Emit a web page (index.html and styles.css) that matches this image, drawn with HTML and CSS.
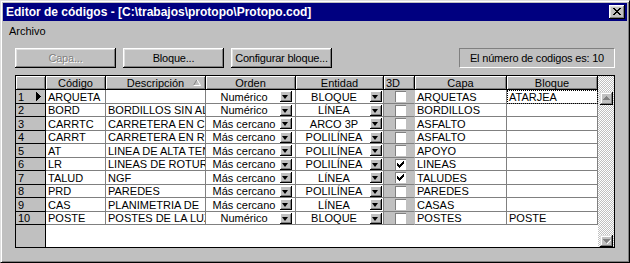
FILE: index.html
```html
<!DOCTYPE html>
<html lang="es">
<head>
<meta charset="utf-8">
<title>Editor de códigos</title>
<link rel="stylesheet" href="styles.css">
</head>
<body>
<div class="window">
  <div class="titlebar">
    <span class="title">Editor de códigos - [C:\trabajos\protopo\Protopo.cod]</span>
    <span class="close"><svg width="8" height="7" viewBox="0 0 8 7" shape-rendering="crispEdges"><path d="M0 0h2v1H0zM6 0h2v1H6zM1 1h2v1H1zM5 1h2v1H5zM2 2h4v1H2zM3 3h2v1H3zM2 4h4v1H2zM1 5h2v1H1zM5 5h2v1H5zM0 6h2v1H0zM6 6h2v1H6z" fill="#000"/></svg></span>
  </div>
  <div class="menubar"><span class="menu-item">Archivo</span></div>
  <div class="content">
    <div class="toolbar">
      <span class="btn disabled">Capa...</span>
      <span class="btn">Bloque...</span>
      <span class="btn">Configurar bloque...</span>
      <span class="count">El número de codigos es: 10</span>
    </div>
    <div class="grid">
      <div class="table">
        <div class="row head">
          <div class="hcell"></div>
          <div class="hcell">Código</div>
          <div class="hcell sorted">Descripción<svg class="sort" width="8" height="7" viewBox="0 0 8 7"><path d="M0.5 6.5L4 0.5" stroke="#808080" fill="none"/><path d="M4 0.5L7.5 6.5H0.5" stroke="#fff" fill="none"/></svg></div>
          <div class="hcell">Orden</div>
          <div class="hcell">Entidad</div>
          <div class="hcell left">3D</div>
          <div class="hcell">Capa</div>
          <div class="hcell">Bloque</div>
        </div>

        <div class="row">
          <div class="rh">1<svg class="pointer" width="5" height="9" viewBox="0 0 5 9" shape-rendering="crispEdges"><path d="M0 0h1v9H0zM1 1h1v7H1zM2 2h1v5H2zM3 3h1v3H3zM4 4h1v1H4z" fill="#000"/></svg></div>
          <div class="cell">ARQUETA</div>
          <div class="cell"></div>
          <div class="cell combo orden"><span class="val">Numérico</span><span class="drop"></span></div>
          <div class="cell combo ent"><span class="val">BLOQUE</span><span class="drop"></span></div>
          <div class="cell chk"><span class="box"></span></div>
          <div class="cell">ARQUETAS</div>
          <div class="cell focus">ATARJEA</div>
        </div>

        <div class="row">
          <div class="rh">2</div>
          <div class="cell">BORD</div>
          <div class="cell">BORDILLOS SIN AL</div>
          <div class="cell combo orden"><span class="val">Numérico</span><span class="drop"></span></div>
          <div class="cell combo ent"><span class="val">LÍNEA</span><span class="drop"></span></div>
          <div class="cell chk"><span class="box"></span></div>
          <div class="cell">BORDILLOS</div>
          <div class="cell"></div>
        </div>

        <div class="row">
          <div class="rh">3</div>
          <div class="cell">CARRTC</div>
          <div class="cell">CARRETERA EN C</div>
          <div class="cell combo orden"><span class="val">Más cercano</span><span class="drop"></span></div>
          <div class="cell combo ent"><span class="val">ARCO 3P</span><span class="drop"></span></div>
          <div class="cell chk"><span class="box"></span></div>
          <div class="cell">ASFALTO</div>
          <div class="cell"></div>
        </div>

        <div class="row">
          <div class="rh">4</div>
          <div class="cell">CARRT</div>
          <div class="cell">CARRETERA EN R</div>
          <div class="cell combo orden"><span class="val">Más cercano</span><span class="drop"></span></div>
          <div class="cell combo ent"><span class="val">POLILÍNEA</span><span class="drop"></span></div>
          <div class="cell chk"><span class="box"></span></div>
          <div class="cell">ASFALTO</div>
          <div class="cell"></div>
        </div>

        <div class="row">
          <div class="rh">5</div>
          <div class="cell">AT</div>
          <div class="cell">LINEA DE ALTA TENSION</div>
          <div class="cell combo orden"><span class="val">Más cercano</span><span class="drop"></span></div>
          <div class="cell combo ent"><span class="val">POLILÍNEA</span><span class="drop"></span></div>
          <div class="cell chk"><span class="box"></span></div>
          <div class="cell">APOYO</div>
          <div class="cell"></div>
        </div>

        <div class="row">
          <div class="rh">6</div>
          <div class="cell">LR</div>
          <div class="cell">LINEAS DE ROTURA</div>
          <div class="cell combo orden"><span class="val">Más cercano</span><span class="drop"></span></div>
          <div class="cell combo ent"><span class="val">POLILÍNEA</span><span class="drop"></span></div>
          <div class="cell chk"><span class="box checked"></span></div>
          <div class="cell">LINEAS</div>
          <div class="cell"></div>
        </div>

        <div class="row">
          <div class="rh">7</div>
          <div class="cell">TALUD</div>
          <div class="cell">NGF</div>
          <div class="cell combo orden"><span class="val">Más cercano</span><span class="drop"></span></div>
          <div class="cell combo ent"><span class="val">LÍNEA</span><span class="drop"></span></div>
          <div class="cell chk"><span class="box checked"></span></div>
          <div class="cell">TALUDES</div>
          <div class="cell"></div>
        </div>

        <div class="row">
          <div class="rh">8</div>
          <div class="cell">PRD</div>
          <div class="cell">PAREDES</div>
          <div class="cell combo orden"><span class="val">Más cercano</span><span class="drop"></span></div>
          <div class="cell combo ent"><span class="val">POLILÍNEA</span><span class="drop"></span></div>
          <div class="cell chk"><span class="box"></span></div>
          <div class="cell">PAREDES</div>
          <div class="cell"></div>
        </div>

        <div class="row">
          <div class="rh">9</div>
          <div class="cell">CAS</div>
          <div class="cell">PLANIMETRIA DE</div>
          <div class="cell combo orden"><span class="val">Más cercano</span><span class="drop"></span></div>
          <div class="cell combo ent"><span class="val">LÍNEA</span><span class="drop"></span></div>
          <div class="cell chk"><span class="box"></span></div>
          <div class="cell">CASAS</div>
          <div class="cell"></div>
        </div>

        <div class="row">
          <div class="rh">10</div>
          <div class="cell">POSTE</div>
          <div class="cell">POSTES DE LA LUZ</div>
          <div class="cell combo orden"><span class="val">Numérico</span><span class="drop"></span></div>
          <div class="cell combo ent"><span class="val">BLOQUE</span><span class="drop"></span></div>
          <div class="cell chk"><span class="box"></span></div>
          <div class="cell">POSTES</div>
          <div class="cell">POSTE</div>
        </div>

        <div class="filler">
          <div class="rh-fill"></div>
          <div class="blank"></div>
        </div>
      </div>
      <div class="vscroll">
        <span class="sbtn up"><svg width="7" height="5" viewBox="0 0 7 5" shape-rendering="crispEdges"><path d="M4 1h1v1H4zM3 2h3v1H3zM2 3h5v1H2z" fill="#fff"/><path d="M3 0h1v1H3zM2 1h3v1H2zM1 2h5v1H1zM0 3h7v1H0z" fill="#808080"/></svg></span>
        <span class="sbtn down"><svg width="8" height="5" viewBox="0 0 8 5" shape-rendering="crispEdges"><path d="M7 1h1v1H7zM6 2h1v1H6zM5 3h1v1H5zM4 4h1v1H4z" fill="#fff"/><path d="M0 0h7v1H0zM1 1h5v1H1zM2 2h3v1H2zM3 3h1v1H3z" fill="#808080"/></svg></span>
      </div>
    </div>
  </div>
</div>
</body>
</html>
```

FILE: styles.css
```css
* {
  box-sizing: border-box;
}

html,
body {
  margin: 0;
  padding: 0;
}

body {
  font-family: "Liberation Sans", Arial, sans-serif;
  font-size: 11px;
  color: #000;
  background: #c0c0c0;
}

.window {
  width: 630px;
  height: 263px;
  background: #c0c0c0;
  border: 1px solid;
  border-color: #dfdfdf #000 #000 #dfdfdf;
  box-shadow: inset 1px 1px #fff, inset -1px -1px #808080;
  padding: 2px;
  display: flex;
  flex-direction: column;
}

.titlebar {
  flex: none;
  height: 18px;
  background: #000080;
  color: #fff;
  display: flex;
  align-items: center;
  padding: 0 2px 0 3px;
}

.title {
  font-weight: bold;
  font-size: 12px;
  white-space: nowrap;
}

.close {
  margin-left: auto;
  width: 16px;
  height: 14px;
  background: #c0c0c0;
  box-shadow: inset -1px -1px #000, inset 1px 1px #fff, inset -2px -2px #808080, inset 2px 2px #dfdfdf;
  display: flex;
  align-items: center;
  justify-content: center;
  padding-bottom: 1px;
}

.close svg {
  display: block;
}

.menubar {
  flex: none;
  height: 19px;
  display: flex;
  align-items: center;
  padding-left: 6px;
}

.content {
  flex: 1;
  padding: 8px 12px 0;
  display: flex;
  flex-direction: column;
}

.toolbar {
  display: flex;
  height: 20px;
  gap: 7px;
}

.btn {
  width: 101px;
  height: 20px;
  display: flex;
  align-items: center;
  justify-content: center;
  background: #c0c0c0;
  box-shadow: inset -1px -1px #000, inset 1px 1px #fff, inset -2px -2px #808080, inset 2px 2px #dfdfdf;
  white-space: nowrap;
  letter-spacing: -0.2px;
}

.btn.disabled {
  color: #808080;
  text-shadow: 1px 1px 0 #fff;
}

.count {
  margin-left: auto;
  width: 156px;
  height: 20px;
  display: flex;
  align-items: center;
  justify-content: center;
  border: 1px solid;
  border-color: #808080 #fff #fff #808080;
  letter-spacing: -0.2px;
  white-space: nowrap;
}

.grid {
  margin-top: 7px;
  height: 173px;
  border: 1px solid #000;
  display: flex;
  background: #fff;
}

.table {
  width: 582px;
  display: flex;
  flex-direction: column;
}

.row {
  display: grid;
  grid-template-columns: 30px 60px 100px 90px 88px 31px 92px 91px;
  height: 14px;
  flex: none;
}

.row:nth-child(odd) {
  height: 13px;
}

.row.head {
  height: 14px;
}

.hcell {
  position: relative;
  background: #c0c0c0;
  border-right: 1px solid #000;
  border-bottom: 1px solid #000;
  box-shadow: inset 1px 1px #fff, inset -1px -1px #808080;
  display: flex;
  align-items: center;
  justify-content: center;
  white-space: nowrap;
  overflow: hidden;
}

.hcell.left {
  justify-content: flex-start;
  padding-left: 2px;
}

.sort {
  position: absolute;
  right: 4px;
  top: 3px;
}

.rh {
  background: #c0c0c0;
  border-right: 1px solid #000;
  border-bottom: 1px solid #000;
  display: flex;
  align-items: center;
  padding-left: 2px;
  position: relative;
}

.pointer {
  position: absolute;
  left: 20px;
  top: 2px;
}

.cell {
  border-right: 1px solid #808080;
  border-bottom: 1px solid #808080;
  display: flex;
  align-items: center;
  padding: 0 2px;
  white-space: nowrap;
  overflow: hidden;
}

.cell.focus {
  outline: 1px dotted #000;
  outline-offset: -1px;
}

.combo {
  padding: 0 3px 0 2px;
}

.combo.ent {
  padding-right: 1px;
}

.combo .val {
  flex: 1;
  text-align: center;
}

.drop {
  flex: none;
  width: 12px;
  height: 11px;
  background: #c0c0c0;
  box-shadow: inset -1px -1px #000, inset 1px 1px #fff, inset -2px -2px #808080;
  position: relative;
}

.drop::after {
  content: "";
  position: absolute;
  left: 2px;
  top: 4px;
  border-left: 3.5px solid transparent;
  border-right: 3.5px solid transparent;
  border-top: 4px solid #000;
}

.chk {
  background: #c0c0c0;
  border-right-color: #c0c0c0;
  justify-content: center;
  padding: 0 0 0 3px;
}

.box {
  width: 11px;
  height: 11px;
  background: #fff;
  border-top: 1px solid #808080;
  border-left: 1px solid #808080;
  position: relative;
}

.box.checked::after {
  content: "";
  position: absolute;
  left: 1px;
  top: 1px;
  width: 7px;
  height: 7px;
  background:
    linear-gradient(#000, #000) 6px 0 / 1px 1px,
    linear-gradient(#000, #000) 5px 1px / 2px 1px,
    linear-gradient(#000, #000) 0 2px / 1px 1px,
    linear-gradient(#000, #000) 4px 2px / 3px 1px,
    linear-gradient(#000, #000) 0 3px / 2px 1px,
    linear-gradient(#000, #000) 3px 3px / 3px 1px,
    linear-gradient(#000, #000) 0 4px / 5px 1px,
    linear-gradient(#000, #000) 1px 5px / 3px 1px,
    linear-gradient(#000, #000) 2px 6px / 1px 1px;
  background-repeat: no-repeat;
}

.filler {
  flex: 1;
  display: flex;
}

.rh-fill {
  width: 30px;
  background: #c0c0c0;
  border-right: 1px solid #000;
}

.blank {
  flex: 1;
  background: #fff;
}

.vscroll {
  width: 16px;
  background: repeating-conic-gradient(#c0c0c0 0 25%, #fff 0 50%) 0 0 / 2px 2px;
  display: flex;
  flex-direction: column;
  padding: 16px 0 0 2px;
}

.sbtn {
  width: 13px;
  background: #c0c0c0;
  box-shadow: inset -1px -1px #000, inset 1px 1px #dfdfdf, inset -2px -2px #808080, inset 2px 2px #fff;
  display: flex;
  align-items: center;
  justify-content: center;
}

.sbtn svg {
  display: block;
}

.sbtn.up {
  height: 13px;
}

.sbtn.down {
  height: 12px;
  margin-top: auto;
}
```
